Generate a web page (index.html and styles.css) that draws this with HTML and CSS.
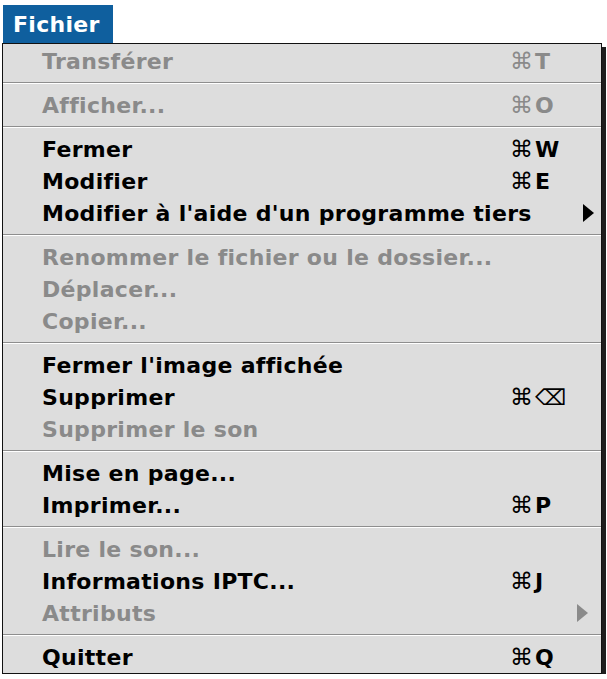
FILE: index.html
```html
<!DOCTYPE html>
<html lang="fr">
<head>
<meta charset="utf-8">
<link rel="stylesheet" href="styles.css">
</head>
<body>
<div class="screen">
  <div class="title">Fichier</div>
  <div class="menu">
    <div class="item off"><span class="label">Transférer</span><span class="key"><span class="cmd">⌘</span>T</span><span class="sub"></span></div>
    <div class="sep"></div>
    <div class="item off"><span class="label">Afficher...</span><span class="key"><span class="cmd">⌘</span>O</span><span class="sub"></span></div>
    <div class="sep"></div>
    <div class="item"><span class="label">Fermer</span><span class="key"><span class="cmd">⌘</span>W</span><span class="sub"></span></div>
    <div class="item"><span class="label">Modifier</span><span class="key"><span class="cmd">⌘</span>E</span><span class="sub"></span></div>
    <div class="item"><span class="label">Modifier à l'aide d'un programme tiers</span><span class="key"></span><span class="sub"><span class="arrow"></span></span></div>
    <div class="sep"></div>
    <div class="item off"><span class="label">Renommer le fichier ou le dossier...</span><span class="key"></span><span class="sub"></span></div>
    <div class="item off"><span class="label">Déplacer...</span><span class="key"></span><span class="sub"></span></div>
    <div class="item off"><span class="label">Copier...</span><span class="key"></span><span class="sub"></span></div>
    <div class="sep"></div>
    <div class="item"><span class="label">Fermer l'image affichée</span><span class="key"></span><span class="sub"></span></div>
    <div class="item"><span class="label">Supprimer</span><span class="key"><span class="cmd">⌘</span><span class="del">⌫</span></span><span class="sub"></span></div>
    <div class="item off"><span class="label">Supprimer le son</span><span class="key"></span><span class="sub"></span></div>
    <div class="sep"></div>
    <div class="item"><span class="label">Mise en page...</span><span class="key"></span><span class="sub"></span></div>
    <div class="item"><span class="label">Imprimer...</span><span class="key"><span class="cmd">⌘</span>P</span><span class="sub"></span></div>
    <div class="sep"></div>
    <div class="item off"><span class="label">Lire le son...</span><span class="key"></span><span class="sub"></span></div>
    <div class="item"><span class="label">Informations IPTC...</span><span class="key"><span class="cmd">⌘</span>J</span><span class="sub"></span></div>
    <div class="item off"><span class="label">Attributs</span><span class="key"></span><span class="sub"><span class="arrow"></span></span></div>
    <div class="sep"></div>
    <div class="item"><span class="label">Quitter</span><span class="key"><span class="cmd">⌘</span>Q</span><span class="sub"></span></div>
  </div>
</div>
</body>
</html>
```
FILE: styles.css
```css
html, body {
  margin: 0;
  padding: 0;
  background: #ffffff;
}
.screen {
  padding: 5px 0 0 2px;
  font-family: "DejaVu Sans", "Open Sans", sans-serif;
  font-weight: 700;
  font-size: 22px;
}
.title {
  display: flex;
  align-items: center;
  margin-left: 1px;
  width: 110px;
  height: 38px;
  box-sizing: border-box;
  padding-left: 10px;
  background: #0f5f9e;
  color: #ffffff;
  letter-spacing: 0.3px;
}
.menu {
  width: 600px;
  box-sizing: border-box;
  border: 1px solid #111111;
  background: #dddddd;
  box-shadow: 4px 4px 0 #1e1e1e;
  padding-top: 1px;
}
.item {
  display: flex;
  align-items: center;
  height: 32px;
  padding-left: 39px;
  color: #000000;
}
.item.off {
  color: #8a8a8a;
}
.label {
  flex: 1;
  white-space: nowrap;
  letter-spacing: 0.3px;
}
.key {
  width: 67px;
  display: flex;
  align-items: center;
  white-space: nowrap;
}
.sub {
  width: 24px;
  display: flex;
  align-items: center;
}
.cmd {
  font-weight: 400;
  font-size: 23px;
  margin-right: 2px;
}
.del {
  font-weight: 400;
  font-size: 22px;
}
.arrow {
  width: 0;
  height: 0;
  border-top: 9px solid transparent;
  border-bottom: 9px solid transparent;
  border-left: 11px solid currentColor;
}
.sep {
  height: 12px;
  display: flex;
  flex-direction: column;
  justify-content: center;
}
.sep::before {
  content: "";
  display: block;
  height: 2px;
  background: linear-gradient(#8e8e8e 0 1px, #ffffff 1px 2px);
}
```
